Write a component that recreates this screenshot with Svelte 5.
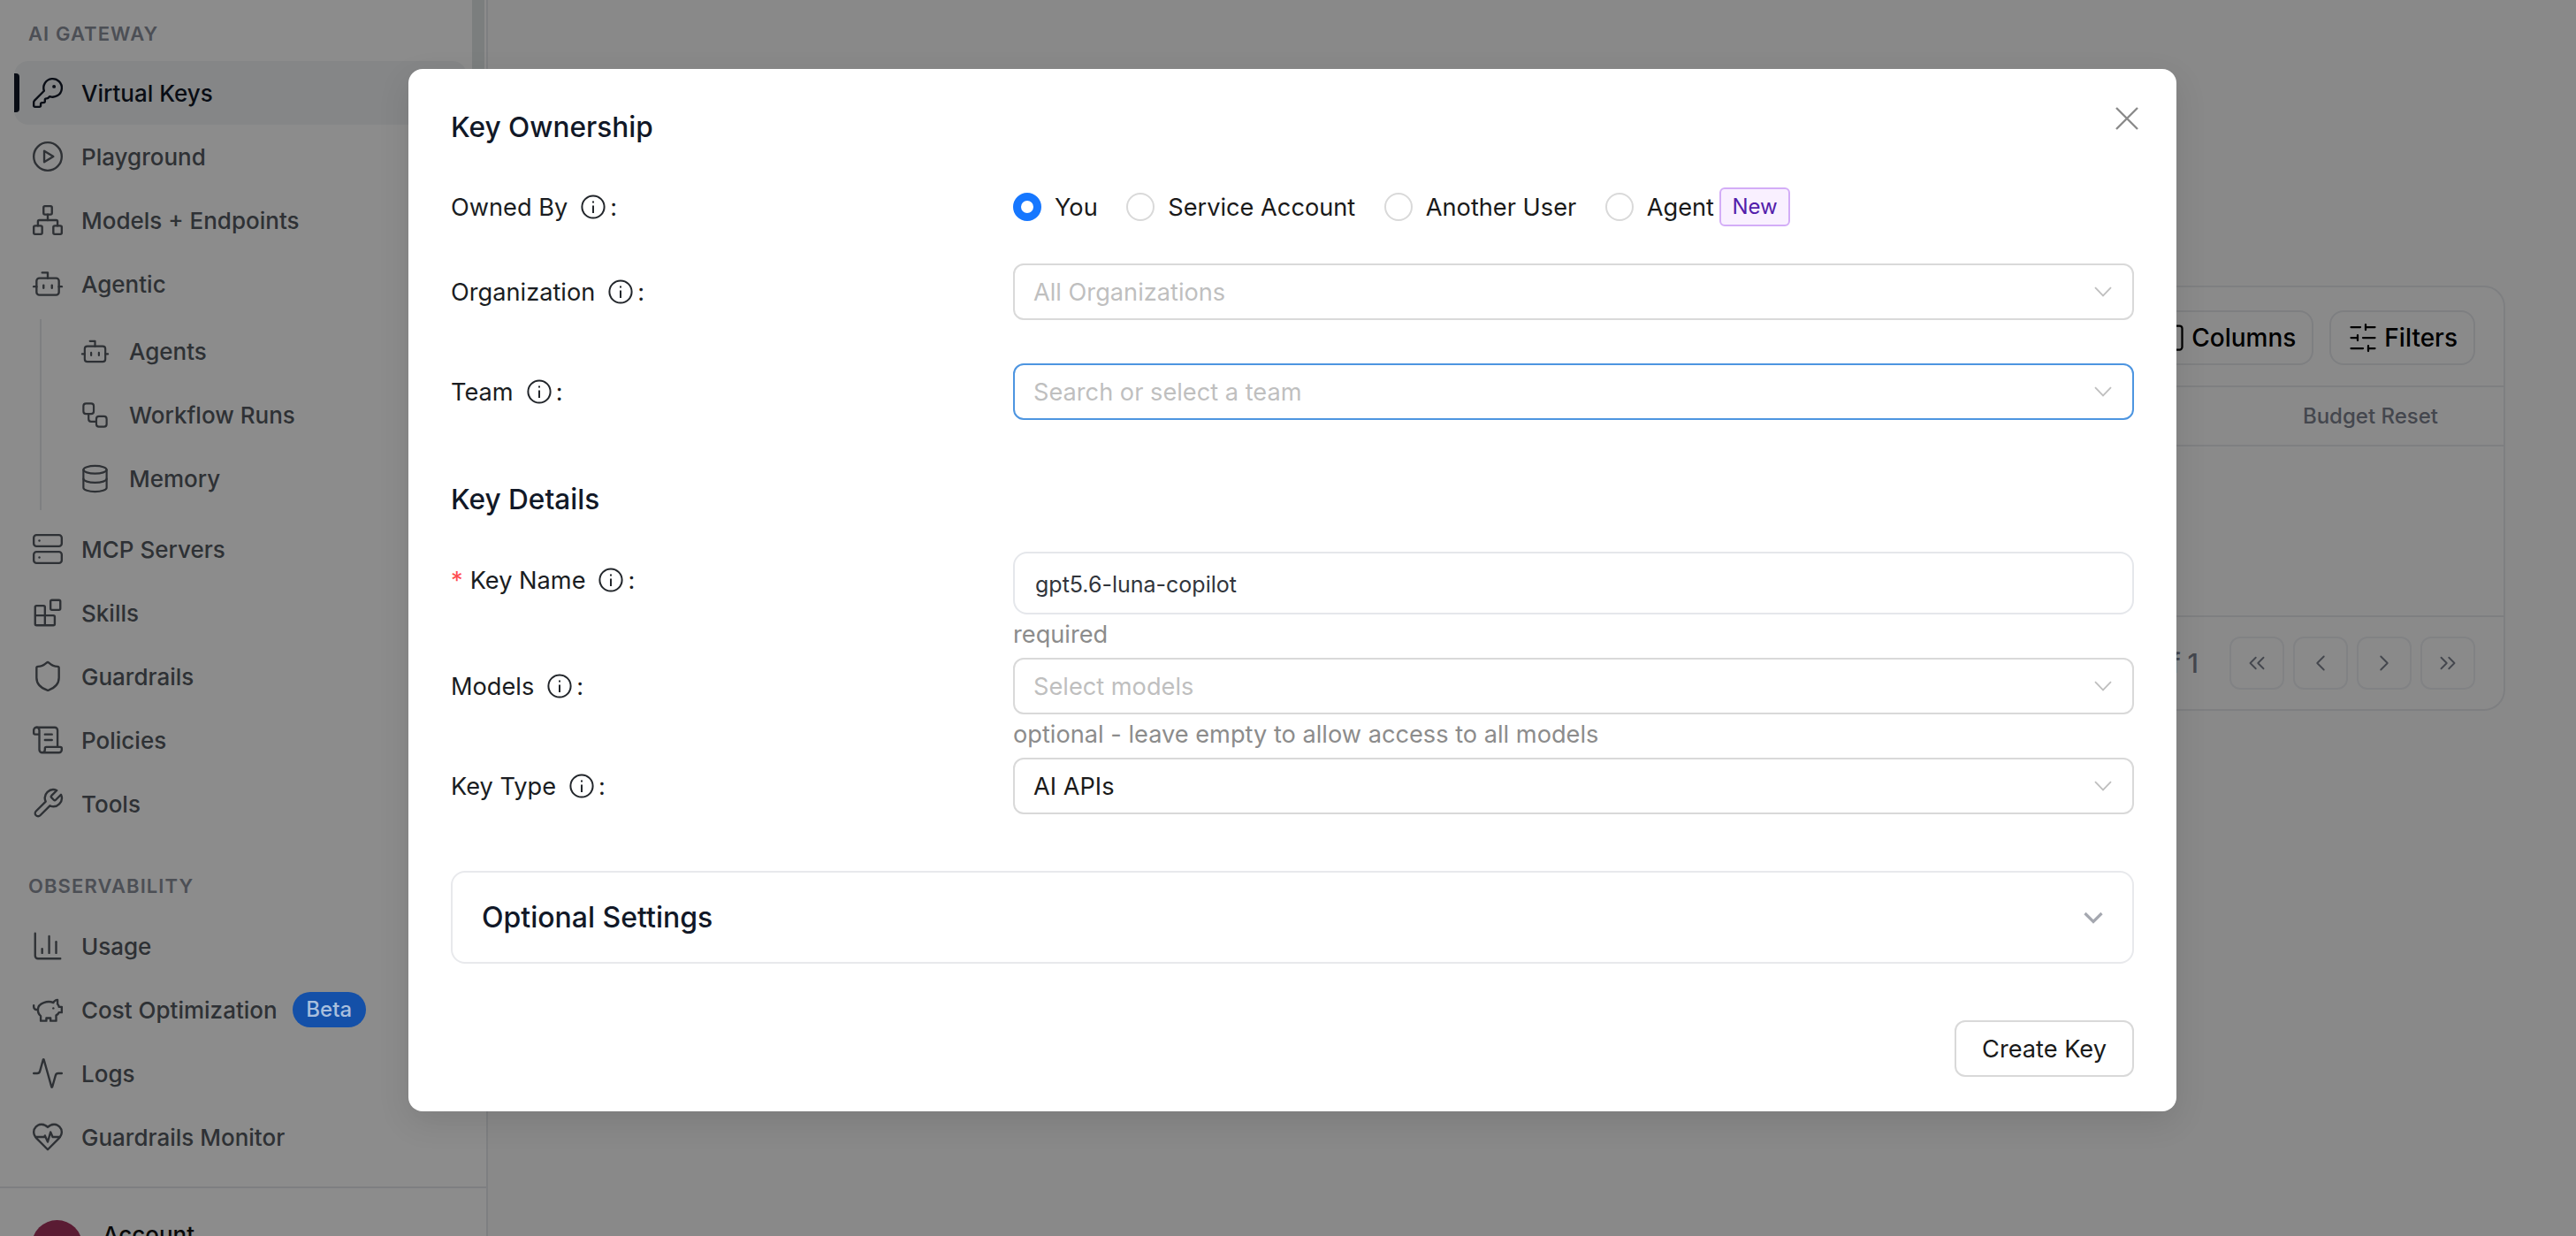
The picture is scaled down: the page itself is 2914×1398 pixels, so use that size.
<script>
	const icons = {
		key: '<path d="M2.586 17.414A2 2 0 0 0 2 18.828V21a1 1 0 0 0 1 1h3a1 1 0 0 0 1-1v-1a1 1 0 0 1 1-1h1a1 1 0 0 0 1-1v-1a1 1 0 0 1 1-1h.172a2 2 0 0 0 1.414-.586l.814-.814a6.5 6.5 0 1 0-4-4z"/><circle cx="16.5" cy="7.5" r=".5" fill="currentColor"/>',
		play: '<circle cx="12" cy="12" r="10"/><path d="M9.5 8v8l6.5-4z"/>',
		network: '<rect x="16" y="16" width="6" height="6" rx="1"/><rect x="2" y="16" width="6" height="6" rx="1"/><rect x="9" y="2" width="6" height="6" rx="1"/><path d="M5 16v-3a1 1 0 0 1 1-1h12a1 1 0 0 1 1 1v3"/><path d="M12 12V8"/>',
		bot: '<path d="M12 8V4H8"/><rect width="16" height="12" x="4" y="8" rx="2"/><path d="M2 14h2"/><path d="M20 14h2"/><path d="M15 13v2"/><path d="M9 13v2"/>',
		workflow: '<rect width="8" height="8" x="3" y="3" rx="2"/><path d="M7 11v4a2 2 0 0 0 2 2h4"/><rect width="8" height="8" x="13" y="13" rx="2"/>',
		database: '<ellipse cx="12" cy="5" rx="9" ry="3"/><path d="M3 5V19A9 3 0 0 0 21 19V5"/><path d="M3 12A9 3 0 0 0 21 12"/>',
		server: '<rect width="20" height="8" x="2" y="2" rx="2"/><rect width="20" height="8" x="2" y="14" rx="2"/><path d="M6 6h.01"/><path d="M6 18h.01"/>',
		blocks: '<rect width="7" height="7" x="14" y="3" rx="1"/><path d="M10 21V8a1 1 0 0 0-1-1H4a1 1 0 0 0-1 1v12a1 1 0 0 0 1 1h12a1 1 0 0 0 1-1v-5a1 1 0 0 0-1-1H3"/>',
		shield: '<path d="M20 13c0 5-3.5 7.5-7.66 8.95a1 1 0 0 1-.67-.01C7.5 20.5 4 18 4 13V6a1 1 0 0 1 1-1c2 0 4.5-1.2 6.24-2.72a1.17 1.17 0 0 1 1.52 0C14.51 3.81 17 5 19 5a1 1 0 0 1 1 1z"/>',
		scroll: '<path d="M15 12h-5"/><path d="M15 8h-5"/><path d="M19 17V5a2 2 0 0 0-2-2H4"/><path d="M8 21h12a2 2 0 0 0 2-2v-1a1 1 0 0 0-1-1H11a1 1 0 0 0-1 1v1a2 2 0 1 1-4 0V5a2 2 0 1 0-4 0v2a1 1 0 0 0 1 1h3"/>',
		wrench: '<path d="M14.7 6.3a1 1 0 0 0 0 1.4l1.6 1.6a1 1 0 0 0 1.4 0l3.77-3.77a6 6 0 0 1-7.94 7.94l-6.91 6.91a2.12 2.12 0 0 1-3-3l6.91-6.91a6 6 0 0 1 7.94-7.94l-3.76 3.76z"/>',
		chart: '<path d="M3 3v16a2 2 0 0 0 2 2h16"/><path d="M18 17V9"/><path d="M13 17V5"/><path d="M8 17v-3"/>',
		piggy: '<path d="M19 5c-1.5 0-2.8 1.4-3 2-3.5-1.5-11-.3-11 5 0 1.8 0 3 2 4.5V20h4v-2h3v2h4v-4c1-.5 1.7-1 2-2h2v-4h-2c0-1-.5-1.5-1-2V5z"/><path d="M2 9v1c0 1.1.9 2 2 2h1"/><path d="M16 11h.01"/>',
		activity: '<path d="M22 12h-2.48a2 2 0 0 0-1.93 1.46l-2.35 8.36a.25.25 0 0 1-.48 0L9.24 2.18a.25.25 0 0 0-.48 0l-2.35 8.36A2 2 0 0 1 4.49 12H2"/>',
		heart: '<path d="M19 14c1.49-1.46 3-3.21 3-5.5A5.5 5.5 0 0 0 16.5 3c-1.76 0-3 .5-4.5 2-1.5-1.5-2.74-2-4.5-2A5.5 5.5 0 0 0 2 8.5c0 2.3 1.5 4.05 3 5.5l7 7Z"/><path d="M3.22 12H9.5l.5-1 2 4.5 2-7 1.5 3.5h5.27"/>',
		sliders: '<path d="M21 4h-7"/><path d="M10 4H3"/><path d="M21 12h-9"/><path d="M8 12H3"/><path d="M21 20h-5"/><path d="M12 20H3"/><path d="M14 2v4"/><path d="M8 10v4"/><path d="M16 18v4"/>',
		columns: '<rect width="18" height="18" x="3" y="3" rx="2"/><path d="M12 3v18"/>',
		first: '<path d="m11 17-5-5 5-5"/><path d="m18 17-5-5 5-5"/>',
		prev: '<path d="m15 18-6-6 6-6"/>',
		next: '<path d="m9 18 6-6-6-6"/>',
		last: '<path d="m6 17 5-5-5-5"/><path d="m13 17 5-5-5-5"/>'
	};

	const gateway = [
		{ label: 'Virtual Keys', icon: 'key', active: true },
		{ label: 'Playground', icon: 'play' },
		{ label: 'Models + Endpoints', icon: 'network' },
		{ label: 'Agentic', icon: 'bot' }
	];
	const agentic = [
		{ label: 'Agents', icon: 'bot' },
		{ label: 'Workflow Runs', icon: 'workflow' },
		{ label: 'Memory', icon: 'database' }
	];
	const gatewayRest = [
		{ label: 'MCP Servers', icon: 'server' },
		{ label: 'Skills', icon: 'blocks' },
		{ label: 'Guardrails', icon: 'shield' },
		{ label: 'Policies', icon: 'scroll' },
		{ label: 'Tools', icon: 'wrench' }
	];
	const observability = [
		{ label: 'Usage', icon: 'chart' },
		{ label: 'Cost Optimization', icon: 'piggy', badge: 'Beta' },
		{ label: 'Logs', icon: 'activity' },
		{ label: 'Guardrails Monitor', icon: 'heart' }
	];
	const pager = ['first', 'prev', 'next', 'last'];
</script>

{#snippet icon(name, cls)}
	<svg class={cls} viewBox="0 0 24 24" fill="none" stroke="currentColor" stroke-width="1.5" stroke-linecap="round" stroke-linejoin="round">{@html icons[name]}</svg>
{/snippet}

{#snippet navItem(item)}
	<a class="nav-item" class:active={item.active} href="#top">
		{@render icon(item.icon, 'nav-icon')}
		<span>{item.label}</span>
		{#if item.badge}<span class="beta">{item.badge}</span>{/if}
	</a>
{/snippet}

{#snippet label(text, required)}
	<div class="label">
		{#if required}<span class="star">*</span>{/if}
		<span>{text}</span>
		<svg class="info" viewBox="0 0 28 28" fill="none" stroke="currentColor" stroke-width="2">
			<circle cx="14" cy="14" r="12.6" />
			<path d="M14 12.5v8.5" />
			<path d="M14 7.4v2.2" />
		</svg>
		<span class="colon">:</span>
	</div>
{/snippet}

{#snippet select(text, placeholder, focused)}
	<div class="select" class:focused class:placeholder>
		<span>{text}</span>
		<svg class="caret" viewBox="0 0 20 12" fill="none" stroke="currentColor" stroke-width="1.8">
			<path d="M1 1.2 10 10.4 19 1.2" />
		</svg>
	</div>
{/snippet}

<div class="page">
	<aside class="sidebar">
		<div class="scroll-thumb"></div>
		<nav>
			<div class="section first">AI GATEWAY</div>
			{#each gateway as item}
				{@render navItem(item)}
			{/each}
			<div class="sub-list">
				{#each agentic as item}
					<a class="nav-item sub" href="#top">
						{@render icon(item.icon, 'sub-icon')}
						<span>{item.label}</span>
					</a>
				{/each}
			</div>
			{#each gatewayRest as item}
				{@render navItem(item)}
			{/each}
			<div class="section">OBSERVABILITY</div>
			{#each observability as item}
				{@render navItem(item)}
			{/each}
		</nav>
		<div class="account">
			<div class="avatar"></div>
			<span>Account</span>
		</div>
	</aside>

	<main class="main">
		<section class="card">
			<div class="toolbar">
				<button class="tool">{@render icon('columns', 'tool-icon')}Columns</button>
				<button class="tool">{@render icon('sliders', 'tool-icon')}Filters</button>
			</div>
			<div class="table-head"><span>Budget Reset</span></div>
			<div class="table-body"></div>
			<div class="table-foot">
				<span class="page-count">Page 1 of 1</span>
				{#each pager as p}
					<button class="pager">{@render icon(p, 'pager-icon')}</button>
				{/each}
			</div>
		</section>
	</main>

	<div class="overlay">
		<div class="modal">
			<button class="close" aria-label="Close">
				<svg viewBox="0 0 26 26" fill="none" stroke="currentColor" stroke-width="2.4">
					<path d="M1 1 25 25M25 1 1 25" />
				</svg>
			</button>

			<h2 class="title">Key Ownership</h2>

			<div class="row owned">
				{@render label('Owned By')}
				<div class="radios">
					<span class="radio checked"></span><span class="radio-text">You</span>
					<span class="radio"></span><span class="radio-text">Service Account</span>
					<span class="radio"></span><span class="radio-text">Another User</span>
					<span class="radio"></span><span class="radio-text last">Agent</span>
					<span class="tag">New</span>
				</div>
			</div>

			<div class="row org">
				{@render label('Organization')}
				{@render select('All Organizations', true)}
			</div>

			<div class="row team">
				{@render label('Team')}
				{@render select('Search or select a team', true, true)}
			</div>

			<h2 class="title details">Key Details</h2>

			<div class="row">
				{@render label('Key Name', true)}
				<div class="field">
					<div class="input">gpt5.6-luna-copilot</div>
					<div class="help">required</div>
				</div>
			</div>

			<div class="row">
				{@render label('Models')}
				<div class="field">
					{@render select('Select models', true)}
					<div class="help">optional - leave empty to allow access to all models</div>
				</div>
			</div>

			<div class="row">
				{@render label('Key Type')}
				{@render select('AI APIs')}
			</div>

			<div class="accordion">
				<span>Optional Settings</span>
				<svg viewBox="0 0 22 14" fill="none" stroke="currentColor" stroke-width="3.2">
					<path d="M1.5 2 11 11.5 20.5 2" />
				</svg>
			</div>

			<div class="actions">
				<button class="submit">Create Key</button>
			</div>
		</div>
	</div>
</div>

<style>
	:global(body) {
		margin: 0;
		overflow: hidden;
	}

	.page {
		position: relative;
		display: flex;
		width: 2914px;
		height: 1398px;
		overflow: hidden;
		font-family: Inter, 'Liberation Sans', sans-serif;
		background: #fafafa;
	}

	button {
		font-family: inherit;
		background: none;
		cursor: pointer;
	}

	.sidebar {
		position: relative;
		flex: 0 0 552px;
		box-sizing: border-box;
		height: 1398px;
		background: #fff;
		border-right: 2px solid #e5e7eb;
		display: flex;
		flex-direction: column;
	}

	.scroll-thumb {
		position: absolute;
		left: 534px;
		top: 0;
		width: 14px;
		height: 300px;
		background: #e0e6e6;
	}

	nav {
		flex: none;
		padding: 23px 22px 0 16px;
		height: 1342px;
		box-sizing: border-box;
	}

	.section {
		margin: 42px 0 17px 16px;
		height: 30px;
		line-height: 30px;
		font-size: 22px;
		font-weight: 600;
		letter-spacing: 1.1px;
		color: #8b909c;
	}

	.section.first {
		margin-top: 0;
		margin-bottom: 16px;
	}

	.nav-item {
		position: relative;
		display: flex;
		align-items: center;
		gap: 19px;
		height: 72px;
		padding-left: 19px;
		border-radius: 16px;
		font-size: 26px;
		font-weight: 500;
		color: #555a61;
		text-decoration: none;
	}

	.nav-item.active {
		background: #f3f5f6;
		color: #111827;
	}

	.nav-item.active::before {
		content: '';
		position: absolute;
		left: 0;
		top: 14px;
		width: 6px;
		height: 44px;
		border-radius: 0 4px 4px 0;
		background: #111827;
	}

	.nav-icon {
		width: 38px;
		height: 38px;
		flex: none;
	}

	.sub-list {
		margin: 4px 0 8px 29px;
		border-left: 2px solid #e5e7eb;
	}

	.nav-item.sub {
		padding-left: 43px;
		gap: 21px;
	}

	.sub-icon {
		width: 35px;
		height: 35px;
		flex: none;
	}

	.beta {
		position: relative;
		z-index: 20;
		margin-left: -2px;
		width: 83px;
		height: 40px;
		line-height: 40px;
		text-align: center;
		border-radius: 20px;
		font-size: 24px;
		font-weight: 500;
		background: #1450a8;
		color: #a9bfdd;
	}

	.account {
		flex: 1;
		display: flex;
		align-items: flex-start;
		gap: 23px;
		border-top: 2px solid #e5e7eb;
		padding: 36px 0 0 36px;
		font-size: 26px;
		font-weight: 500;
		color: #111;
	}

	.account span {
		line-height: 34px;
		margin-top: 0;
	}

	.avatar {
		width: 57px;
		height: 57px;
		flex: none;
		border-radius: 50%;
		background: #a4335d;
	}

	.main {
		flex: 1;
		padding: 323px 80px 0 80px;
	}

	.card {
		box-sizing: border-box;
		height: 481px;
		background: #fcfcfc;
		border: 2px solid #e5e7eb;
		border-radius: 24px;
		display: flex;
		flex-direction: column;
	}

	.toolbar {
		height: 113px;
		flex: none;
		box-sizing: border-box;
		padding: 26px 32px 0 0;
		display: flex;
		justify-content: flex-end;
		gap: 18px;
		border-bottom: 2px solid #e5e7eb;
	}

	.tool {
		height: 62px;
		display: flex;
		align-items: center;
		gap: 6px;
		padding: 0 18px 0 18px;
		border: 2px solid #e5e7eb;
		border-radius: 16px;
		font-size: 28px;
		font-weight: 500;
		color: #000;
	}

	.tool-icon {
		width: 36px;
		height: 36px;
	}

	.table-head {
		height: 67px;
		flex: none;
		box-sizing: border-box;
		display: flex;
		align-items: center;
		justify-content: flex-end;
		padding-right: 74px;
		font-size: 24px;
		font-weight: 500;
		color: #7c818e;
		border-bottom: 2px solid #e5e7eb;
	}

	.table-body {
		flex: none;
		height: 191px;
		border-bottom: 2px solid #e5e7eb;
	}

	.table-foot {
		flex: 1;
		display: flex;
		align-items: center;
		justify-content: flex-end;
		gap: 10px;
		padding: 0 32px 0 0;
	}

	.page-count {
		margin-right: 25px;
		font-size: 30px;
		font-weight: 500;
		color: #7c818e;
	}

	.pager {
		width: 62px;
		height: 60px;
		padding: 0;
		display: flex;
		align-items: center;
		justify-content: center;
		border: 2px solid #ebedf0;
		border-radius: 12px;
		color: #7c818e;
	}

	.pager-icon {
		width: 30px;
		height: 30px;
	}

	.overlay {
		position: absolute;
		inset: 0;
		z-index: 10;
		background: rgba(0, 0, 0, 0.45);
		display: flex;
		justify-content: center;
		padding: 78px 0 0 10px;
		box-sizing: border-box;
	}

	.modal {
		position: relative;
		box-sizing: border-box;
		width: 2000px;
		height: 1179px;
		padding: 44px 48px 0;
		background: #fff;
		border-radius: 16px;
		box-shadow: 0 12px 36px rgba(0, 0, 0, 0.1);
		color: #1a1d22;
	}

	.close {
		position: absolute;
		top: 43px;
		right: 43px;
		width: 26px;
		height: 26px;
		padding: 0;
		border: 0;
		color: #8a8a8a;
	}

	.close svg {
		display: block;
	}

	.title {
		margin: 0;
		height: 44px;
		line-height: 44px;
		font-size: 31.6px;
		font-weight: 500;
		color: #111827;
	}

	.title.details {
		margin-top: 68px;
	}

	.row {
		display: flex;
	}

	.owned {
		margin-top: 36px;
		margin-bottom: 32px;
		height: 64px;
		align-items: center;
	}

	.team {
		margin-top: 49px;
	}

	.details + .row {
		margin-top: 37px;
	}

	.label {
		flex: 0 0 636px;
		height: 64px;
		display: flex;
		align-items: center;
		font-size: 27.2px;
		color: #1a1d22;
	}

	.star {
		margin-right: 8px;
		color: #ff4d4f;
	}

	.info {
		width: 28px;
		height: 28px;
		margin-left: 15px;
		color: #22262b;
	}

	.colon {
		margin-left: 5px;
	}

	.radios {
		display: flex;
		align-items: center;
		font-size: 27.2px;
		color: #1a1a1a;
	}

	.radio {
		box-sizing: border-box;
		width: 32px;
		height: 32px;
		border-radius: 50%;
		border: 2px solid #d9d9d9;
	}

	.radio.checked {
		border: 9px solid #1677ff;
	}

	.radio-text {
		margin: 0 32.5px 0 15px;
	}

	.radio-text.last {
		margin-right: 6px;
	}

	.tag {
		box-sizing: border-box;
		width: 80px;
		height: 44px;
		line-height: 40px;
		text-align: center;
		font-size: 24px;
		color: #531dab;
		background: #f9f0ff;
		border: 2px solid #d3adf7;
		border-radius: 6px;
	}

	.field {
		flex: 1;
		min-width: 0;
	}

	.select {
		flex: 1;
		box-sizing: border-box;
		height: 64px;
		padding: 0 23px 0 21px;
		display: flex;
		align-items: center;
		justify-content: space-between;
		border: 2px solid #d9d9d9;
		border-radius: 12px;
		font-size: 27.2px;
		color: #1a1a1a;
	}

	.select.placeholder {
		color: #bfbfbf;
	}

	.select.focused {
		border-color: #4d95e0;
	}

	.caret {
		width: 20px;
		height: 12px;
		color: #bfbfbf;
	}

	.input {
		box-sizing: border-box;
		height: 71px;
		line-height: 70px;
		padding-left: 23px;
		border: 2px solid #e5e7eb;
		border-radius: 16px;
		font-size: 25px;
		color: #31353c;
	}

	.help {
		height: 49px;
		line-height: 46px;
		font-size: 27.2px;
		color: #8c8c8c;
	}

	.accordion {
		box-sizing: border-box;
		margin-top: 64px;
		height: 105px;
		padding: 0 33px 0 33px;
		display: flex;
		align-items: center;
		justify-content: space-between;
		border: 2px solid #e8e9ec;
		border-radius: 16px;
		font-size: 32px;
		font-weight: 500;
		color: #111827;
	}

	.accordion svg {
		width: 22px;
		height: 14px;
		color: #a5a8b0;
	}

	.actions {
		margin-top: 64px;
		display: flex;
		justify-content: flex-end;
	}

	.submit {
		box-sizing: border-box;
		width: 203px;
		height: 64px;
		padding: 0;
		border: 2px solid #d9d9d9;
		border-radius: 12px;
		font-size: 27.2px;
		color: #1a1a1a;
	}
</style>
